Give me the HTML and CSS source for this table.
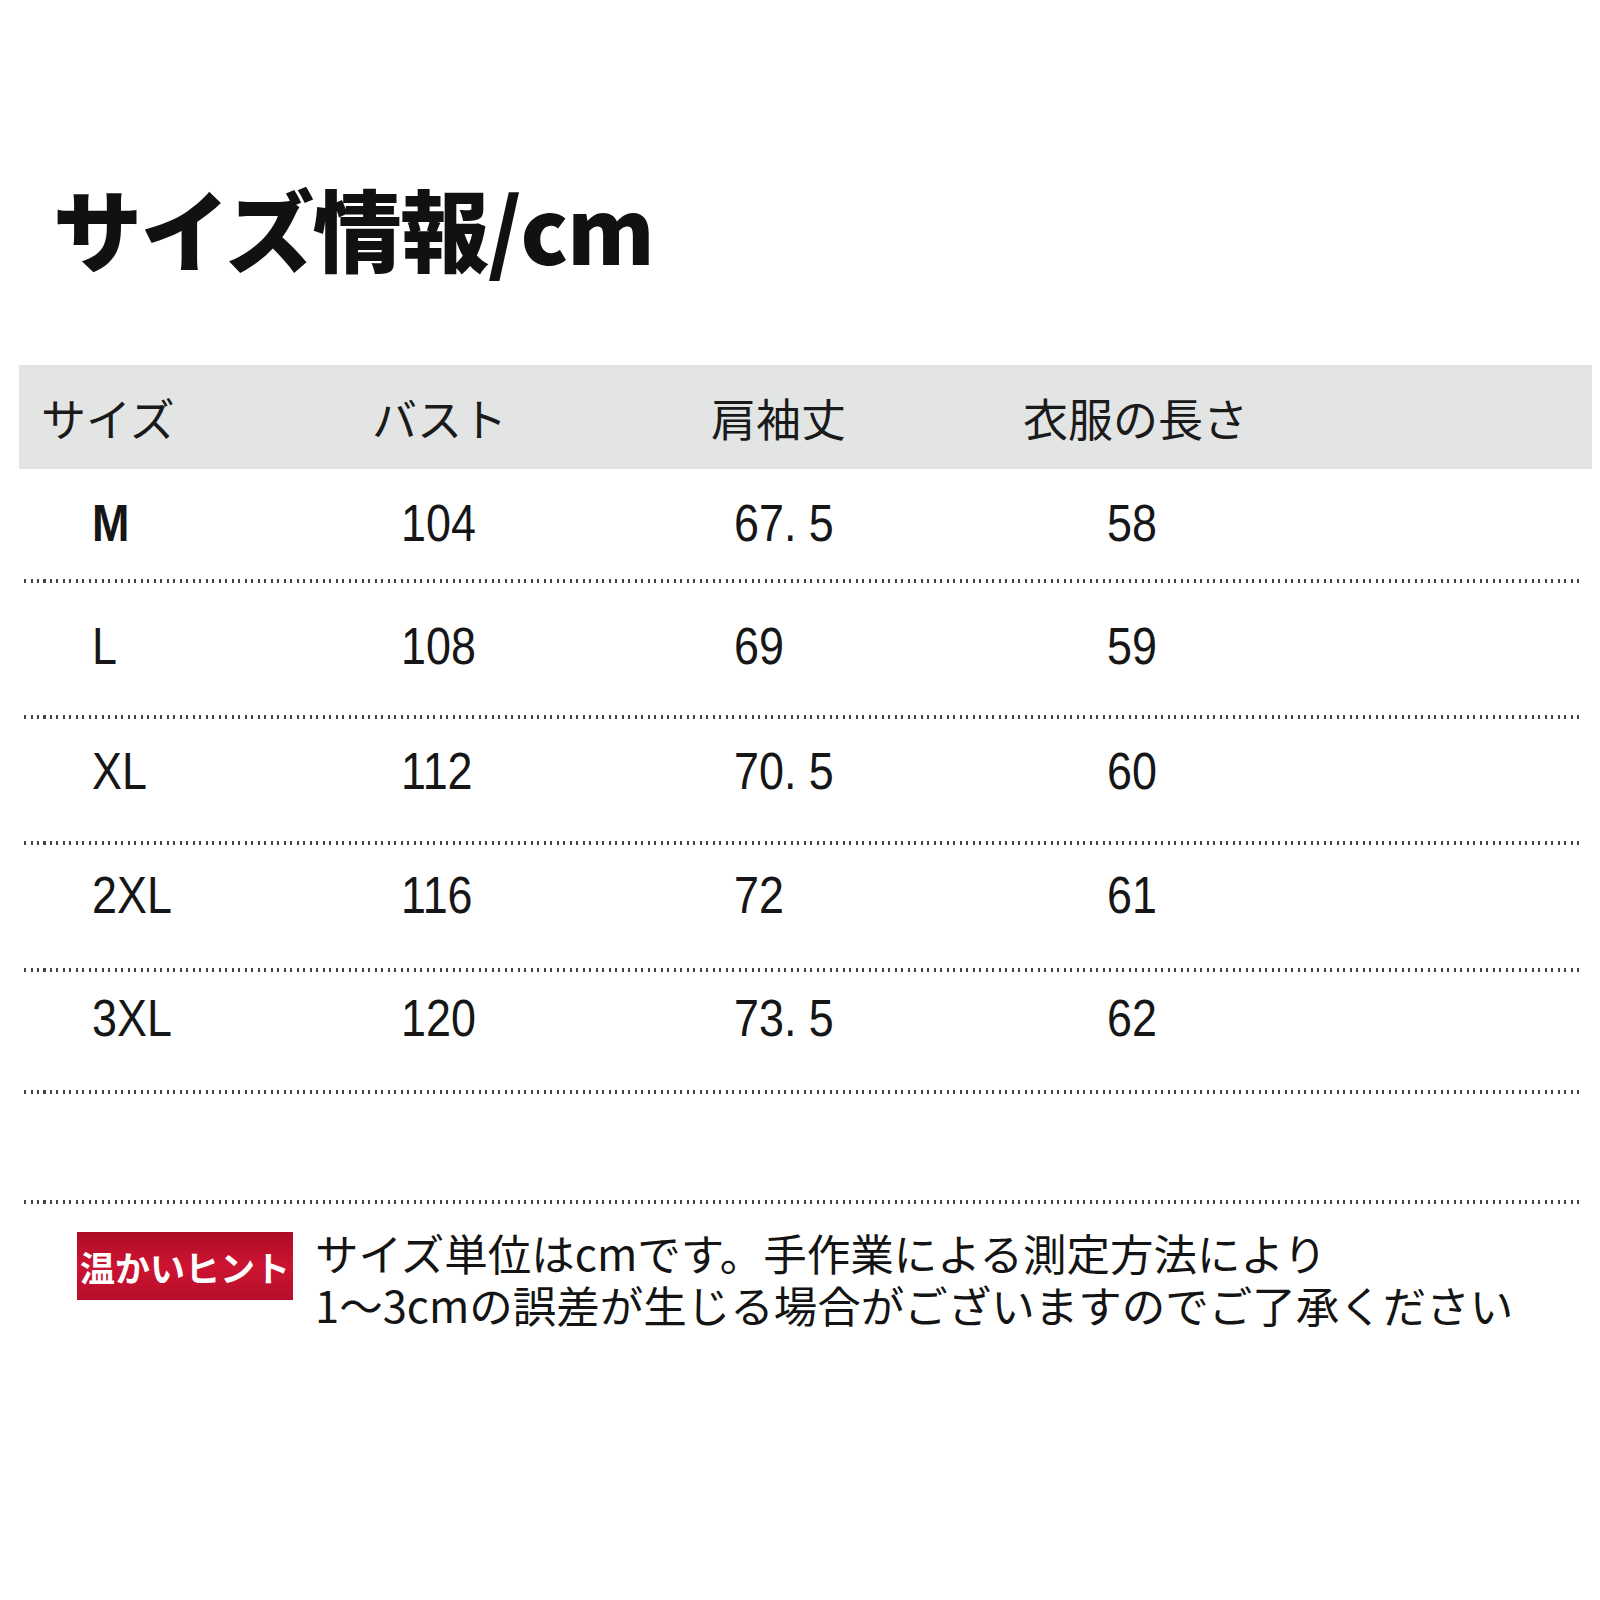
FILE: index.html
```html
<!DOCTYPE html>
<html lang="ja">
<head>
<meta charset="utf-8">
<title>サイズ情報</title>
<link rel="stylesheet" href="styles.css">
</head>
<body>
<div class="page">
  <h1 class="title">サイズ情報/cm</h1>

  <div class="table">
    <div class="thead">
      <div class="th c1">サイズ</div>
      <div class="th c2">バスト</div>
      <div class="th c3">肩袖丈</div>
      <div class="th c4">衣服の長さ</div>
    </div>

    <div class="row r1">
      <div class="cells">
        <div class="td c1"><span class="num bold">M</span></div>
        <div class="td c2"><span class="num">104</span></div>
        <div class="td c3"><span class="num">67. 5</span></div>
        <div class="td c4"><span class="num">58</span></div>
      </div>
      <div class="dots"></div>
    </div>
    <div class="row r2">
      <div class="cells">
        <div class="td c1"><span class="num">L</span></div>
        <div class="td c2"><span class="num">108</span></div>
        <div class="td c3"><span class="num">69</span></div>
        <div class="td c4"><span class="num">59</span></div>
      </div>
      <div class="dots"></div>
    </div>
    <div class="row r3">
      <div class="cells">
        <div class="td c1"><span class="num">XL</span></div>
        <div class="td c2"><span class="num">112</span></div>
        <div class="td c3"><span class="num">70. 5</span></div>
        <div class="td c4"><span class="num">60</span></div>
      </div>
      <div class="dots"></div>
    </div>
    <div class="row r4">
      <div class="cells">
        <div class="td c1"><span class="num">2XL</span></div>
        <div class="td c2"><span class="num">116</span></div>
        <div class="td c3"><span class="num">72</span></div>
        <div class="td c4"><span class="num">61</span></div>
      </div>
      <div class="dots"></div>
    </div>
    <div class="row r5">
      <div class="cells">
        <div class="td c1"><span class="num">3XL</span></div>
        <div class="td c2"><span class="num">120</span></div>
        <div class="td c3"><span class="num">73. 5</span></div>
        <div class="td c4"><span class="num">62</span></div>
      </div>
      <div class="dots"></div>
    </div>
    <div class="row spacer">
      <div class="cells"></div>
      <div class="dots"></div>
    </div>
  </div>

  <div class="hint">
    <div class="badge">温かいヒント</div>
    <p class="hint-text"><span class="hint-line">サイズ単位はcmです。手作業による測定方法により</span><span class="hint-line">1〜3cmの誤差が生じる場合がございますのでご了承ください</span></p>
  </div>
</div>
</body>
</html>
```

FILE: styles.css
```css
html, body {
  margin: 0;
  padding: 0;
  background: #ffffff;
}

.page {
  width: 1600px;
  height: 1600px;
  box-sizing: border-box;
  padding-top: 182px;
  color: #141414;
  font-family: "Noto Sans CJK JP", "Noto Sans", sans-serif;
}

.title {
  margin: 0 0 94px 53px;
  font-size: 89px;
  line-height: 89px;
  font-weight: 900;
  color: #111111;
  letter-spacing: -1.5px;
}

.table {
  margin-left: 19px;
  width: 1573px;
}

.thead {
  height: 104px;
  background: #e3e4e4;
  display: grid;
  grid-template-columns: 331px 339px 312px 1fr;
  align-items: center;
}

.th {
  font-size: 45px;
  line-height: 1;
  font-weight: 400;
  color: #1a1a1a;
  padding-left: 22px;
}

.row {
  display: flex;
  flex-direction: column;
}
.r1 { height: 114px; }
.r2 { height: 136px; }
.r3 { height: 126px; }
.r4 { height: 127px; }
.r5 { height: 122px; }
.spacer { height: 110px; }

.cells {
  flex: 1;
  display: grid;
  grid-template-columns: 331px 339px 312px 1fr;
  align-items: center;
}
.r1 .cells { padding-bottom: 2px; }
.r2 .cells { padding-bottom: 6px; }
.r3 .cells { padding-bottom: 18px; }
.r4 .cells { padding-bottom: 23px; }
.r5 .cells { padding-bottom: 26px; }

.td {
  font-family: "Liberation Sans", Arial, sans-serif;
  font-size: 51px;
  line-height: 1;
  color: #161616;
}
.td.c1 { padding-left: 73px; }
.td.c2 { padding-left: 51px; }
.td.c3 { padding-left: 45px; }
.td.c4 { padding-left: 106px; }

.num {
  display: inline-block;
  transform: scaleX(0.88);
  transform-origin: left center;
  white-space: pre;
}
.num.bold { font-weight: 700; }

.dots {
  height: 4px;
  margin: 0 10px 0 5px;
  background: repeating-linear-gradient(to right, #444444 0 2px, transparent 2px 6.5px);
}

.hint {
  display: flex;
  align-items: flex-start;
  margin-top: 28px;
  margin-left: 77px;
}

.badge {
  width: 216px;
  height: 68px;
  box-sizing: border-box;
  display: flex;
  align-items: center;
  justify-content: center;
  background: linear-gradient(#ad0c26 0%, #cc1431 50%, #b50e2a 100%);
  color: #ffffff;
  font-size: 35px;
  font-weight: 700;
  letter-spacing: 0;
  white-space: nowrap;
}

.hint-text {
  margin: -5px 0 0 22px;
  display: flex;
  flex-direction: column;
  font-size: 43.5px;
  line-height: 52px;
  font-weight: 400;
  color: #141414;
  white-space: nowrap;
}

.hint-line {
  display: block;
  height: 52px;
}
```
